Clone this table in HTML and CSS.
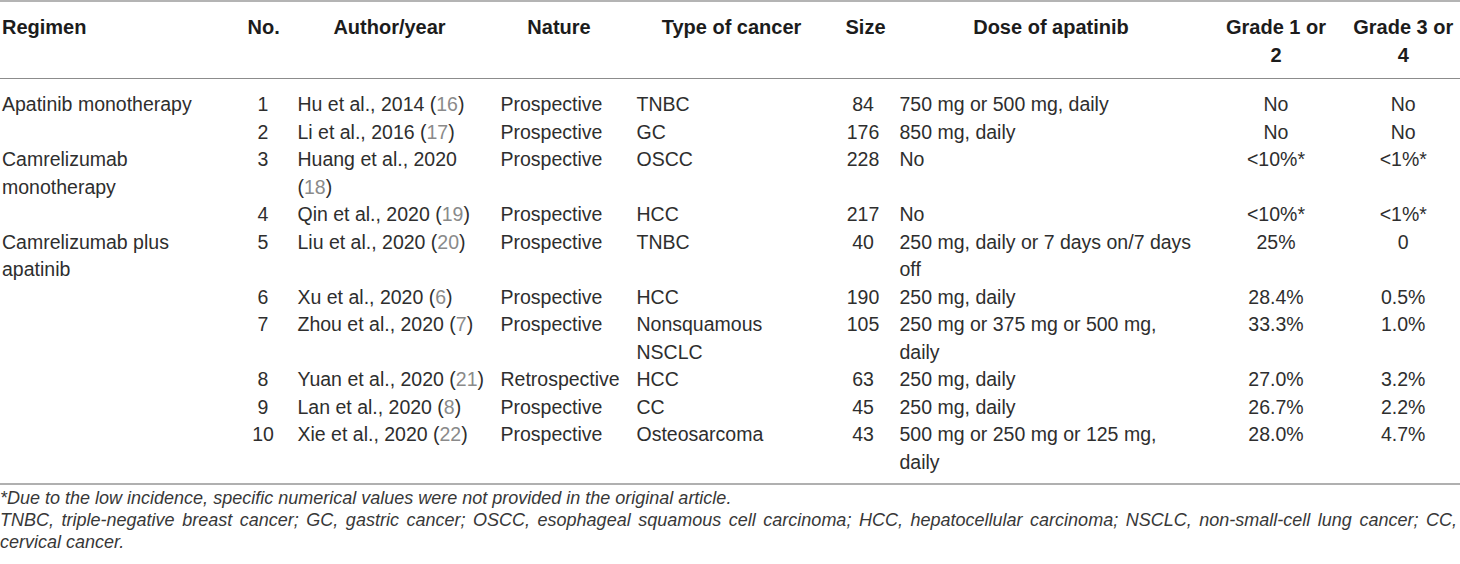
FILE: index.html
```html
<!DOCTYPE html>
<html lang="en">
<head>
<meta charset="utf-8">
<title>Table</title>
<link rel="stylesheet" href="styles.css">
</head>
<body>
<div class="page">
  <table class="data">
    <colgroup>
      <col class="c-reg"><col class="c-no"><col class="c-auth"><col class="c-nat"><col class="c-type"><col class="c-size"><col class="c-dose"><col class="c-g12"><col class="c-g34">
    </colgroup>
    <thead>
      <tr>
        <th class="left reg">Regimen</th>
        <th>No.</th>
        <th>Author/year</th>
        <th>Nature</th>
        <th>Type of cancer</th>
        <th>Size</th>
        <th>Dose of apatinib</th>
        <th>Grade 1 or<br>2</th>
        <th class="last">Grade 3 or<br>4</th>
      </tr>
    </thead>
    <tbody>
      <tr class="first">
        <td class="reg">Apatinib monotherapy</td>
        <td class="ctr">1</td>
        <td>Hu et al., 2014 (<span class="ref">16</span>)</td>
        <td>Prospective</td>
        <td>TNBC</td>
        <td class="ctr">84</td>
        <td>750 mg or 500 mg, daily</td>
        <td class="ctr">No</td>
        <td class="ctr last">No</td>
      </tr>
      <tr>
        <td class="reg"></td>
        <td class="ctr">2</td>
        <td>Li et al., 2016 (<span class="ref">17</span>)</td>
        <td>Prospective</td>
        <td>GC</td>
        <td class="ctr">176</td>
        <td>850 mg, daily</td>
        <td class="ctr">No</td>
        <td class="ctr last">No</td>
      </tr>
      <tr>
        <td class="reg">Camrelizumab<br>monotherapy</td>
        <td class="ctr">3</td>
        <td>Huang et al., 2020<br>(<span class="ref">18</span>)</td>
        <td>Prospective</td>
        <td>OSCC</td>
        <td class="ctr">228</td>
        <td>No</td>
        <td class="ctr">&lt;10%*</td>
        <td class="ctr last">&lt;1%*</td>
      </tr>
      <tr>
        <td class="reg"></td>
        <td class="ctr">4</td>
        <td>Qin et al., 2020 (<span class="ref">19</span>)</td>
        <td>Prospective</td>
        <td>HCC</td>
        <td class="ctr">217</td>
        <td>No</td>
        <td class="ctr">&lt;10%*</td>
        <td class="ctr last">&lt;1%*</td>
      </tr>
      <tr>
        <td class="reg">Camrelizumab plus<br>apatinib</td>
        <td class="ctr">5</td>
        <td>Liu et al., 2020 (<span class="ref">20</span>)</td>
        <td>Prospective</td>
        <td>TNBC</td>
        <td class="ctr">40</td>
        <td>250 mg, daily or 7 days on/7 days<br>off</td>
        <td class="ctr">25%</td>
        <td class="ctr last">0</td>
      </tr>
      <tr>
        <td class="reg"></td>
        <td class="ctr">6</td>
        <td>Xu et al., 2020 (<span class="ref">6</span>)</td>
        <td>Prospective</td>
        <td>HCC</td>
        <td class="ctr">190</td>
        <td>250 mg, daily</td>
        <td class="ctr">28.4%</td>
        <td class="ctr last">0.5%</td>
      </tr>
      <tr>
        <td class="reg"></td>
        <td class="ctr">7</td>
        <td>Zhou et al., 2020 (<span class="ref">7</span>)</td>
        <td>Prospective</td>
        <td>Nonsquamous<br>NSCLC</td>
        <td class="ctr">105</td>
        <td>250 mg or 375 mg or 500 mg,<br>daily</td>
        <td class="ctr">33.3%</td>
        <td class="ctr last">1.0%</td>
      </tr>
      <tr>
        <td class="reg"></td>
        <td class="ctr">8</td>
        <td>Yuan et al., 2020 (<span class="ref">21</span>)</td>
        <td>Retrospective</td>
        <td>HCC</td>
        <td class="ctr">63</td>
        <td>250 mg, daily</td>
        <td class="ctr">27.0%</td>
        <td class="ctr last">3.2%</td>
      </tr>
      <tr>
        <td class="reg"></td>
        <td class="ctr">9</td>
        <td>Lan et al., 2020 (<span class="ref">8</span>)</td>
        <td>Prospective</td>
        <td>CC</td>
        <td class="ctr">45</td>
        <td>250 mg, daily</td>
        <td class="ctr">26.7%</td>
        <td class="ctr last">2.2%</td>
      </tr>
      <tr class="final">
        <td class="reg"></td>
        <td class="ctr">10</td>
        <td>Xie et al., 2020 (<span class="ref">22</span>)</td>
        <td>Prospective</td>
        <td>Osteosarcoma</td>
        <td class="ctr">43</td>
        <td>500 mg or 250 mg or 125 mg,<br>daily</td>
        <td class="ctr">28.0%</td>
        <td class="ctr last">4.7%</td>
      </tr>
    </tbody>
  </table>
  <div class="notes">
    <p>*Due to the low incidence, specific numerical values were not provided in the original article.</p>
    <p>TNBC, triple-negative breast cancer; GC, gastric cancer; OSCC, esophageal squamous cell carcinoma; HCC, hepatocellular carcinoma; NSCLC, non-small-cell lung cancer; CC, cervical cancer.</p>
  </div>
</div>
</body>
</html>
```

FILE: styles.css
```css
html, body {
  margin: 0;
  padding: 0;
  background: #ffffff;
}

.page {
  width: 1460px;
  font-family: "Liberation Sans", Arial, sans-serif;
  color: #2e2e2e;
}

.data {
  width: 1460px;
  table-layout: fixed;
  border-collapse: separate;
  border-spacing: 0;
}

.c-reg { width: 238px; }
.c-no { width: 50px; }
.c-auth { width: 203px; }
.c-nat { width: 136px; }
.c-type { width: 209px; }
.c-size { width: 54px; }
.c-dose { width: 322px; }
.c-g12 { width: 128px; }
.c-g34 { width: 120px; }

.data th {
  font-size: 20px;
  font-weight: bold;
  line-height: 28px;
  color: #1c1c1c;
  text-align: center;
  vertical-align: top;
  padding: 11px 9.5px 9px;
  border-top: 2px solid #b4b4b4;
  border-bottom: 1px solid #8c8c8c;
  white-space: nowrap;
}

.data th.left {
  text-align: left;
}

.data .reg {
  padding-left: 2px;
}

.data .last {
  padding-right: 3px;
}

.data td {
  font-size: 19.5px;
  line-height: 27.5px;
  vertical-align: top;
  text-align: left;
  padding: 0 9.5px;
  white-space: nowrap;
}

.data td.reg {
  padding-left: 2px;
}

.data td.last {
  padding-right: 3px;
}

.data td.ctr {
  text-align: center;
}

.data tr.first td {
  padding-top: 12px;
}

.data tr.final td {
  padding-bottom: 7px;
  border-bottom: 2px solid #b0b0b0;
}

.ref {
  color: #8a8a8a;
}

.notes {
  width: 1457px;
  margin-top: 2px;
  font-size: 18px;
  font-style: italic;
  line-height: 22px;
  color: #383838;
}

.notes p {
  margin: 0;
  text-align: justify;
}
```
